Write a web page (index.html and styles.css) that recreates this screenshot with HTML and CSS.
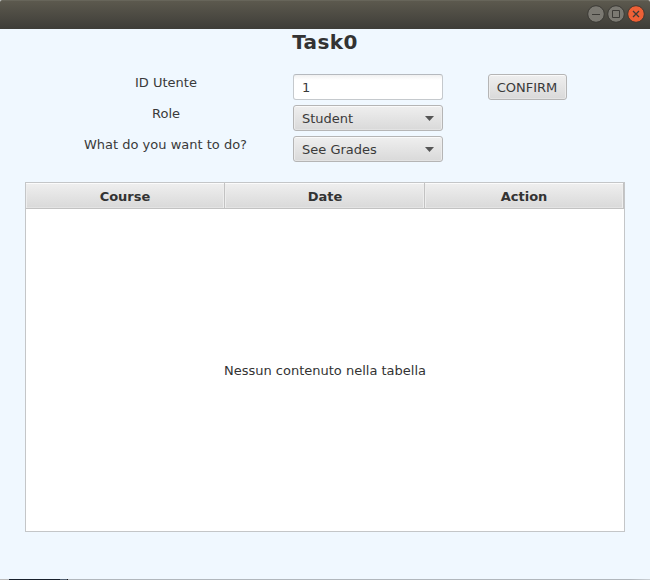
FILE: index.html
```html
<!DOCTYPE html>
<html lang="it">
<head>
<meta charset="utf-8">
<title>Task0</title>
<link rel="stylesheet" href="styles.css">
</head>
<body>
<div class="window">
  <header class="titlebar">
    <svg class="control" viewBox="0 0 18 18"><circle class="disc" cx="9" cy="9" r="8.3"/><path class="glyph" d="M5 9.5h8"/></svg>
    <svg class="control" viewBox="0 0 18 18"><circle class="disc" cx="9" cy="9" r="8.3"/><path class="glyph" d="M5.5 5.5h7v7h-7z"/></svg>
    <svg class="control" viewBox="0 0 18 18"><circle class="disc close" cx="9" cy="9" r="8.3"/><path class="glyph cross" d="M6 6l6 6M12 6l-6 6"/></svg>
  </header>
  <main class="content">
    <h1 class="title">Task0</h1>
    <form class="form">
      <label class="label">ID Utente</label>
      <div class="field">1</div>
      <div class="button">CONFIRM</div>
      <label class="label">Role</label>
      <div class="combo"><span>Student</span><i class="arrow"></i></div>
      <label class="label action-label">What do you want to do?</label>
      <div class="combo"><span>See Grades</span><i class="arrow"></i></div>
    </form>
    <section class="table">
      <div class="head">
        <div class="column">Course</div>
        <div class="column date">Date</div>
        <div class="column">Action</div>
      </div>
      <div class="placeholder">Nessun contenuto nella tabella</div>
    </section>
  </main>
  <footer class="edge"></footer>
</div>
</body>
</html>
```
FILE: styles.css
```css
* { box-sizing: border-box; }
body { margin: 0; font: 13px/16px "DejaVu Sans", sans-serif; color: #333; background: #fff; }
.window { width: 650px; height: 580px; display: flex; flex-direction: column; overflow: hidden; background: #f0f8ff; }
.titlebar {
  flex: none; height: 29px; display: flex; justify-content: flex-end; gap: 2px;
  padding: 5px 5px 0 0; border-radius: 2px 2px 0 0;
  background: linear-gradient(#5c594e, #3e3d38); border-top: 1px solid #67655a;
  box-shadow: 0 -4px 0 4px #d8d8d6;
  z-index: 0;
}
.control { width: 18px; height: 18px; margin-top: -1px; }
.disc { fill: #7b7972; stroke: #3b3a35; }
.disc.close { fill: #ee6036; stroke: #45372f; }
.glyph { fill: none; stroke: #3c3b37; stroke-width: 1; }
.cross { stroke-width: 1.3; }
.content { flex: 1; display: flex; flex-direction: column; align-items: center; }
.title { margin: 0; height: 45px; font-size: 20px; line-height: 26px; letter-spacing: 0.4px; }
.form {
  display: grid; grid-template-columns: 255px 150px 79px; grid-template-rows: repeat(3, 26px);
  column-gap: 0; row-gap: 5px; align-self: flex-start; margin: 0 0 20px 38px; color: #3a3a3a;
}
.label { grid-column: 1; padding: 1px 0 0 1px; text-align: center; }
.action-label { padding-left: 0; }
.field, .combo { grid-column: 2; border-radius: 3px; }
.field {
  border: 1px solid #c5c9cd; border-top-color: #b5b9be; padding: 5px 8px;
  background: linear-gradient(#f1f1f1, #fff 5px);
}
.button, .combo {
  border: 1px solid #b5b5b5; border-radius: 3px;
  background: linear-gradient(#efefef, #d9d9d9);
  box-shadow: inset 0 1px #fafafa, inset 1px 0 #ececec, inset -1px 0 #ececec, inset 0 -1px #e3e3e3;
}
.button { grid-column: 3; margin-left: 45px; width: 79px; padding: 5px 1px 0 0; text-align: center; }
.combo { display: flex; justify-content: space-between; align-items: flex-start; padding: 5px 8px 0; }
.arrow { margin-top: 5px; width: 9px; height: 5px; background: #555; clip-path: polygon(0 0, 100% 0, 50% 100%); }
.table { width: 600px; height: 350px; border: 1px solid #c4c6c8; background: #fff; display: flex; flex-direction: column; }
.head { flex: none; display: grid; grid-template-columns: 199px 200px 199px; height: 26px; }
.column {
  padding: 6px 0 0; text-align: center; font-weight: bold;
  border-right: 1px solid #c2c2c2; border-bottom: 1px solid #c2c2c2;
  background: linear-gradient(#efefef, #d9d9d9);
  box-shadow: inset 0 1px #fbfbfb, inset 1px 0 #ededed, inset -1px 0 #ededed, inset 0 -1px #e3e3e3;
}
.date { padding-left: 1px; }
.placeholder { flex: 1; padding-top: 2px; display: flex; align-items: center; justify-content: center; }
.edge {
  flex: none; height: 1px;
  background: linear-gradient(90deg, #bbb 9px, #18202c 9px 60px, #526070 60px 67px, #111 67px 68px, #b1b7bd 68px 630px, #ccd1d6);
}
```
